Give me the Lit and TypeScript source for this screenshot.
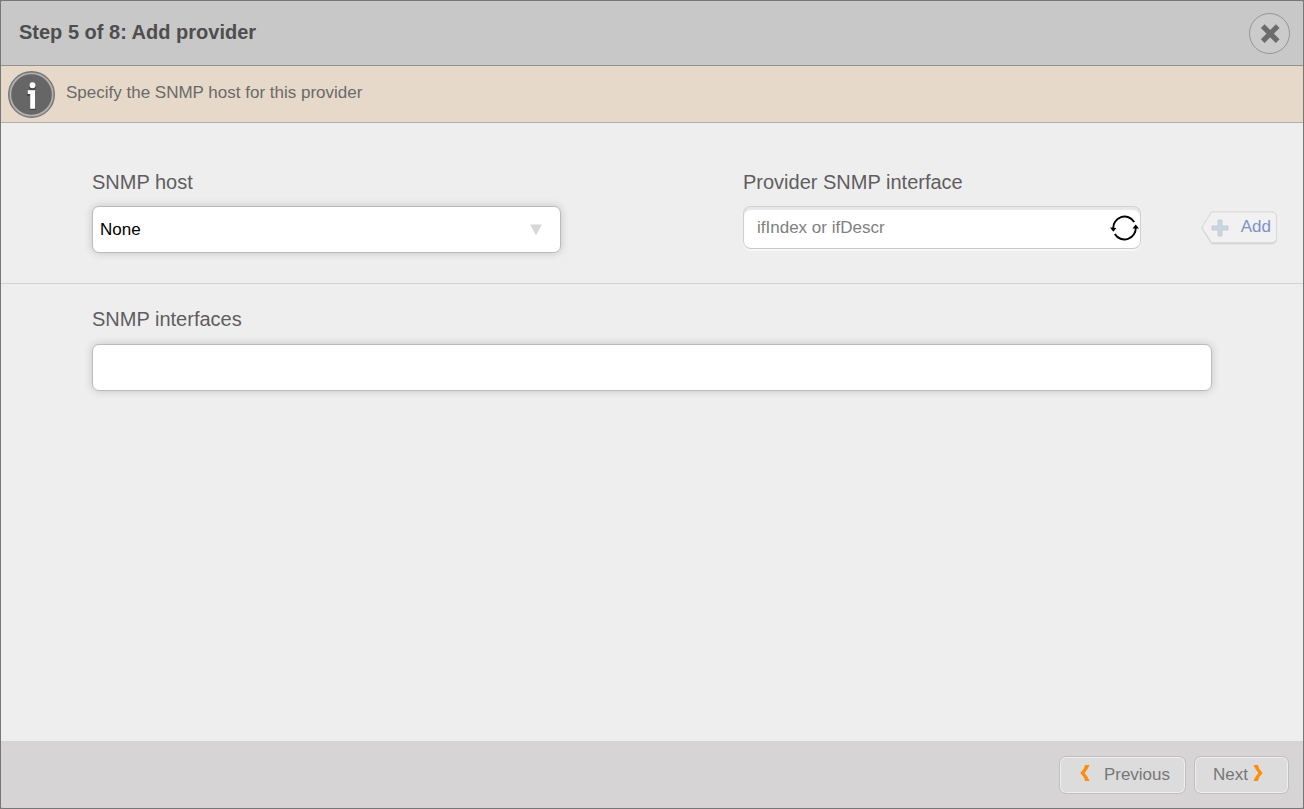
import { LitElement, html, css } from "lit";
import { customElement, state } from "lit/decorators.js";

@customElement("app-root")
export class AppRoot extends LitElement {
  static styles = css`
    :host {
      display: block;
      min-height: 100vh;
      background: #777;
      font-family: "Liberation Sans", Arial, sans-serif;
      font-size: 17px;
      line-height: 20px;
      color: #6a6a6a;
    }
    * {
      box-sizing: border-box;
    }
    button,
    input,
    select {
      font: inherit;
      margin: 0;
    }
    .dialog {
      display: flex;
      flex-direction: column;
      min-height: 100vh;
      border: 1px solid #777;
      border-radius: 3px;
      background: #eee;
      overflow: hidden;
    }
    .header {
      display: flex;
      justify-content: space-between;
      align-items: center;
      height: 65px;
      padding: 0 13px 0 18px;
      background: #c8c8c8;
      border-bottom: 1px solid #929292;
    }
    .title {
      margin: 0;
      padding-bottom: 2px;
      font-size: 20px;
      line-height: 24px;
      font-weight: bold;
      color: #4e4e4e;
    }
    .close {
      display: flex;
      align-items: center;
      justify-content: center;
      width: 41px;
      height: 41px;
      padding: 0;
      border: 1px solid #949494;
      border-radius: 50%;
      background: #cbcbcb;
    }
    .notice {
      display: flex;
      align-items: center;
      gap: 11px;
      height: 57px;
      padding: 0 7px;
      background: #e6d9c9;
      border-bottom: 1px solid #aeaeae;
    }
    .notice-text {
      margin: 0;
      padding-bottom: 2px;
    }
    .content {
      flex: 1;
    }
    .columns {
      display: grid;
      grid-template-columns: 1fr 1fr;
      padding: 47px 0 30px;
      border-bottom: 1px solid #d2d2d2;
    }
    .column {
      padding-left: 91px;
    }
    .label {
      display: block;
      margin: 0 0 12px;
      font-size: 20px;
      line-height: 24px;
      font-weight: normal;
      color: #5e5e5e;
    }
    .select-wrap {
      display: grid;
      align-items: center;
      width: 469px;
      max-width: 100%;
    }
    .select-wrap > * {
      grid-area: 1 / 1;
    }
    .box {
      height: 47px;
      border: 1px solid #bbb;
      border-radius: 7px;
      background: #fff;
      box-shadow: 0 0 8px rgba(0, 0, 0, 0.18);
    }
    .select {
      appearance: none;
      width: 100%;
      padding: 0 40px 0 7px;
      color: #000;
    }
    .arrow {
      justify-self: end;
      margin-right: 19px;
      pointer-events: none;
    }
    .entry {
      display: flex;
      justify-content: space-between;
      align-items: center;
      gap: 24px;
      height: 43px;
      padding-right: 26px;
    }
    .field {
      display: flex;
      align-items: center;
      flex: 0 1 398px;
      height: 43px;
      border: 1px solid #d0d0d0;
      border-bottom-color: #c8c8c8;
      border-radius: 8px;
      background: #fff;
      box-shadow: inset 0 3px 1px #e8e8e8, 0 2px 0 #f6f6f6;
    }
    .input {
      flex: 1;
      min-width: 0;
      height: 100%;
      padding: 0 8px 0 13px;
      border: 0;
      background: transparent;
      color: #333;
    }
    .input::placeholder {
      color: #7f7f7f;
      opacity: 1;
    }
    .refresh {
      display: flex;
      padding: 0 1px 0 0;
      border: 0;
      background: none;
    }
    .add {
      display: grid;
      padding: 0;
      border: 0;
      background: none;
      color: #7c92c8;
    }
    .add > * {
      grid-area: 1 / 1;
    }
    .add-text {
      align-self: center;
      justify-self: end;
      padding: 0 6px 2px 0;
    }
    .interfaces {
      padding: 23px 91px 30px;
    }
    .list {
      margin: 13px 0 0;
      padding: 0;
      list-style: none;
      height: auto;
      min-height: 47px;
    }
    .footer {
      display: flex;
      justify-content: flex-end;
      align-items: center;
      gap: 8px;
      height: 67px;
      padding: 0 14px;
      background: #d6d4d5;
    }
    .nav {
      display: flex;
      align-items: center;
      height: 38px;
      border: 1px solid #bfbfbf;
      border-radius: 7px;
      background: #dcdcdc;
      box-shadow: inset 0 0 0 1px #efefef;
      color: #777;
    }
    .previous {
      gap: 14px;
      padding: 0 15px 0 20px;
    }
    .next {
      gap: 5px;
      padding: 0 25px 0 18px;
    }
    .chevron {
      padding-bottom: 3px;
      box-sizing: content-box;
    }
  `;

  @state() private descriptor = "";

  private onInput(event: Event) {
    this.descriptor = (event.target as HTMLInputElement).value;
  }

  render() {
    return html`
      <section class="dialog" role="dialog" aria-labelledby="title">
        <header class="header">
          <h1 class="title" id="title">Step 5 of 8: Add provider</h1>
          <button class="close" type="button" aria-label="Close">
            <svg width="20" height="20" viewBox="0 0 20 20">
              <path d="M2.700 3.200 17.700 18.200M17.700 3.200 2.700 18.200" stroke="#6c6c6c" stroke-width="5.200" />
            </svg>
          </button>
        </header>

        <div class="notice">
          <svg width="47" height="47" viewBox="0 0 47 47" aria-hidden="true">
            <circle cx="23.5" cy="23.5" r="22.8" fill="#666" stroke="#777" stroke-width="1.4" />
            <circle cx="23.5" cy="23.5" r="21.2" fill="none" stroke="#b0b0ae" stroke-width="1.8" />
            <g fill="#444" transform="translate(0 1)">
              <circle cx="24.5" cy="14.5" r="3.6" />
              <path d="M19 19h9v19h-6V24h-3z" />
            </g>
            <circle cx="24.5" cy="14.2" r="3" fill="#fff" />
            <path d="M19.700 19.200h7.500v18.500h-5V23H19.700z" fill="#fff" />
          </svg>
          <p class="notice-text">Specify the SNMP host for this provider</p>
        </div>

        <form class="content" @submit=${(e: Event) => e.preventDefault()}>
          <div class="columns">
            <div class="column">
              <label class="label" for="host">SNMP host</label>
              <div class="select-wrap">
                <select class="box select" id="host">
                  <option>None</option>
                </select>
                <svg class="arrow" width="12" height="12" viewBox="0 0 12 12" aria-hidden="true">
                  <path d="M0 .5h12L6 11.500z" fill="#d8d8d8" />
                </svg>
              </div>
            </div>

            <div class="column">
              <label class="label" for="interface">Provider SNMP interface</label>
              <div class="entry">
                <div class="field">
                  <input
                    class="input"
                    id="interface"
                    type="text"
                    placeholder="ifIndex or ifDescr"
                    .value=${this.descriptor}
                    @input=${this.onInput}
                  />
                  <button class="refresh" type="button" aria-label="Refresh interfaces">
                    <svg width="29" height="26" viewBox="0 0 29 26">
                      <g fill="none" stroke="#000" stroke-width="1.9">
                        <path d="M3.3 14A11.3 11.3 0 0 1 24.2 7" />
                        <path d="M25.7 12A11.3 11.3 0 0 1 4.8 19" />
                      </g>
                      <path d="M0 12.4 6.4 13 3.3 16.8zM22.5 13.6 25.7 9.6 29 13.6z" fill="#000" />
                    </svg>
                  </button>
                </div>
                <button class="add" type="button">
                  <svg width="76" height="34" viewBox="0 0 76 34" aria-hidden="true">
                    <path d="M10.500 1h59.500q5.500 0 5.500 5v22q0 5-5.500 5H10.500L.5 17z" fill="#d6d6d6" stroke="#d9d9d9" />
                    <path d="M10.500 1h59.500q5.500 0 5.500 5v20.500q0 5-5.500 5H10.500L1 16.500z" fill="#f1f1f1" stroke="#dadada" />
                    <path d="M17 9h4v6h6v4h-6v6h-4v-6h-6v-4h6z" fill="#ccd5e2" stroke="#bdc8da" stroke-width=".8" />
                  </svg>
                  <span class="add-text">Add</span>
                </button>
              </div>
            </div>
          </div>

          <div class="interfaces">
            <h2 class="label" id="interfaces">SNMP interfaces</h2>
            <ul class="box list" aria-labelledby="interfaces"></ul>
          </div>
        </form>

        <footer class="footer">
          <button class="nav previous" type="button">
            <svg class="chevron" width="10" height="16" viewBox="0 0 10 16" aria-hidden="true">
              <path d="M9.500 0H5.200Q4.200 4.500.3 8 4.200 11.500 5.200 16h4.300Q7.800 11.500 4.600 8 7.800 4.500 9.500 0z" fill="#ff8c0a" />
            </svg>
            Previous
          </button>
          <button class="nav next" type="button">
            Next
            <svg class="chevron" width="10" height="16" viewBox="0 0 10 16" aria-hidden="true">
              <path d="M.5 0h4.300Q5.800 4.500 9.700 8 5.800 11.500 4.800 16H.5Q2.200 11.500 5.400 8 2.200 4.500.5 0z" fill="#ff8c0a" />
            </svg>
          </button>
        </footer>
      </section>
    `;
  }
}
